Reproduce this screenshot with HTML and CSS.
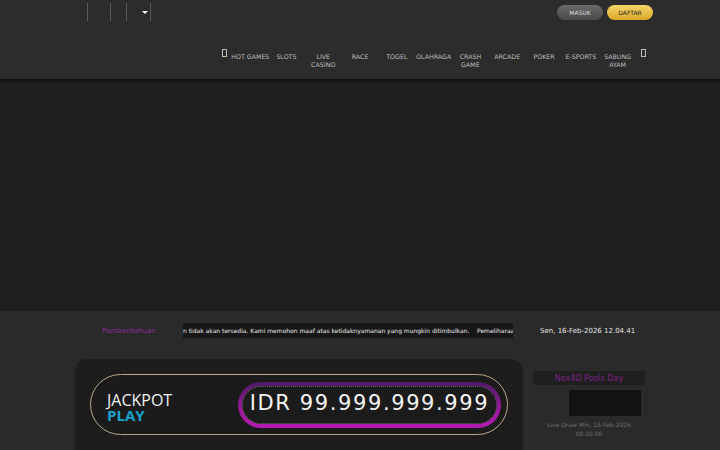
FILE: index.html
```html
<!DOCTYPE html>
<html lang="id">
<head>
    <meta charset="UTF-8">
    <meta name="viewport" content="width=device-width, initial-scale=1.0">
    <title>Nex4D</title>
    <link rel="stylesheet" href="styles.css">
</head>
<body>
    <header class="header">
        <div class="header-inner">
            <div class="top-row">
                <div class="links">
                    <span class="sep"></span>
                    <span class="sep sep-b"></span>
                    <span class="sep sep-c"></span>
                    <span class="caret"></span>
                    <span class="sep sep-d"></span>
                </div>
                <div class="auth">
                    <a class="btn btn-login">MASUK</a>
                    <a class="btn btn-register">DAFTAR</a>
                </div>
            </div>
            <nav class="nav">
                <span class="tofu"></span>
                <a class="nav-item">HOT GAMES</a>
                <a class="nav-item">SLOTS</a>
                <a class="nav-item">LIVE<br>CASINO</a>
                <a class="nav-item">RACE</a>
                <a class="nav-item">TOGEL</a>
                <a class="nav-item">OLAHRAGA</a>
                <a class="nav-item">CRASH<br>GAME</a>
                <a class="nav-item">ARCADE</a>
                <a class="nav-item">POKER</a>
                <a class="nav-item">E-SPORTS</a>
                <a class="nav-item">SABUNG<br>AYAM</a>
                <span class="tofu tofu-right"></span>
            </nav>
        </div>
    </header>

    <div class="banner"></div>

    <main class="main">
        <div class="container">
            <div class="notice-row">
                <div class="notice-label">Pemberitahuan</div>
                <div class="marquee"><span>n tidak akan tersedia. Kami memohon maaf atas ketidaknyamanan yang mungkin ditimbulkan.&nbsp;&nbsp;&nbsp;&nbsp;Pemeliharaan</span></div>
                <div class="clock">Sen, 16-Feb-2026 12.04.41</div>
            </div>

            <div class="jackpot-row">
                <div class="jackpot">
                    <div class="jackpot-pill">
                        <div class="jackpot-title">
                            <div class="jp-word">JACKPOT</div>
                            <div class="jp-play">PLAY</div>
                        </div>
                        <div class="jackpot-amount">
                            <div class="amount-inner">IDR 99.999.999.999</div>
                        </div>
                    </div>
                </div>
                <div class="pools">
                    <div class="pools-title">Nex4D Pools Day</div>
                    <div class="pools-result"></div>
                    <div class="pools-draw">Live Draw Min, 15-Feb-2026<br>00.00.00</div>
                </div>
            </div>
        </div>
    </main>
</body>
</html>
```

FILE: styles.css
```css
body {
    margin: 0;
    padding: 0;
    font-family: "DejaVu Sans", sans-serif;
    background-color: #2a2a2a;
    color: #ddd;
}
a {
    text-decoration: none;
}
.header {
    height: 79px;
    background-color: #2c2c2c;
    box-shadow: 0 1px 3px rgba(0, 0, 0, 0.7);
    position: relative;
}
.header-inner {
    width: 590px;
    margin: 0 auto;
}
.top-row {
    display: flex;
    justify-content: space-between;
    align-items: flex-start;
    height: 48px;
}
.links {
    display: flex;
    align-items: center;
    margin-left: 22px;
    margin-top: 3px;
    height: 18px;
}
.sep {
    width: 1px;
    height: 18px;
    background-color: #5a5a5a;
}
.sep-b {
    margin-left: 22px;
}
.sep-c {
    margin-left: 15px;
}
.caret {
    margin-left: 15px;
    width: 0;
    height: 0;
    border-left: 3px solid transparent;
    border-right: 3px solid transparent;
    border-top: 3px solid #fff;
}
.sep-d {
    margin-left: 2px;
}
.auth {
    display: flex;
    gap: 4px;
    margin-top: 5px;
    margin-right: 2px;
}
.btn {
    display: block;
    width: 46px;
    height: 15px;
    line-height: 15px;
    border-radius: 8px;
    text-align: center;
    font-size: 6px;
}
.btn-login {
    background: linear-gradient(#6a6a6a, #484848);
    color: #ddd;
}
.btn-register {
    background: linear-gradient(#f7d567, #d9a82a);
    color: #2a2a2a;
}
.nav {
    display: flex;
    justify-content: flex-end;
    align-items: flex-start;
    margin-right: 9px;
}
.tofu {
    width: 3px;
    height: 6px;
    border: 1px solid #bbb;
    margin-top: 1px;
    margin-right: 4px;
}
.tofu-right {
    margin-left: 5px;
    margin-right: 0;
}
.nav-item {
    width: 36.8px;
    text-align: center;
    font-size: 6.3px;
    line-height: 8px;
    color: #bdbdbd;
    white-space: nowrap;
    margin-top: 5px;
}
.banner {
    height: 232px;
    background-color: #1f1f1f;
}
.container {
    width: 570px;
    margin: 0 auto;
}
.notice-row {
    display: flex;
    align-items: center;
    padding-top: 12px;
    height: 15px;
}
.notice-label {
    width: 108px;
    text-align: center;
    color: #8e2c9e;
    font-size: 7px;
}
.marquee {
    width: 330px;
    height: 15px;
    line-height: 15px;
    background-color: #171717;
    overflow: hidden;
    white-space: nowrap;
    font-size: 6px;
    color: #eee;
}
.clock {
    margin-left: 27px;
    font-size: 7px;
    color: #e4e4e4;
}
.jackpot-row {
    display: flex;
    margin-top: 21px;
}
.jackpot {
    width: 418px;
    height: 100px;
    padding: 15px;
    background-color: #1d1d1d;
    border-radius: 12px;
}
.jackpot-pill {
    display: flex;
    align-items: center;
    height: 59px;
    border: 1.5px solid #b9a98a;
    border-radius: 31px;
    background-color: #1b1b1b;
    padding: 0 6px 0 16px;
}
.jackpot-title {
    width: 131px;
    padding-top: 5px;
}
.jp-word {
    font-family: "Open Sans", sans-serif;
    font-size: 16px;
    line-height: 17px;
    color: #f2f2f2;
}
.jp-play {
    font-family: "Open Sans", sans-serif;
    font-weight: bold;
    font-size: 15px;
    line-height: 15px;
    margin-top: -1px;
    color: #1aa2cf;
}
.jackpot-amount {
    flex: 1;
    height: 38px;
    padding: 4px;
    border-radius: 24px;
    background: linear-gradient(#4e1a66, #a0199f 65%, #b31bb3);
}
.amount-inner {
    height: 36px;
    border: 1px dotted #6a6a6a;
    border-radius: 20px;
    background-color: #1b1b1b;
    text-align: center;
    line-height: 32px;
    font-size: 21px;
    letter-spacing: 1.6px;
    color: #f4f4f4;
}
.pools {
    width: 112px;
    margin-left: 10px;
    padding-top: 12px;
    text-align: center;
}
.pools-title {
    height: 14px;
    line-height: 15px;
    background-color: #1f1f1f;
    color: #7e2186;
    font-size: 8px;
}
.pools-result {
    width: 72px;
    height: 26px;
    margin: 5px 4px 0 auto;
    background-color: #121212;
}
.pools-draw {
    margin-top: 4px;
    font-size: 6px;
    line-height: 9px;
    color: #6e6e6e;
}
```
